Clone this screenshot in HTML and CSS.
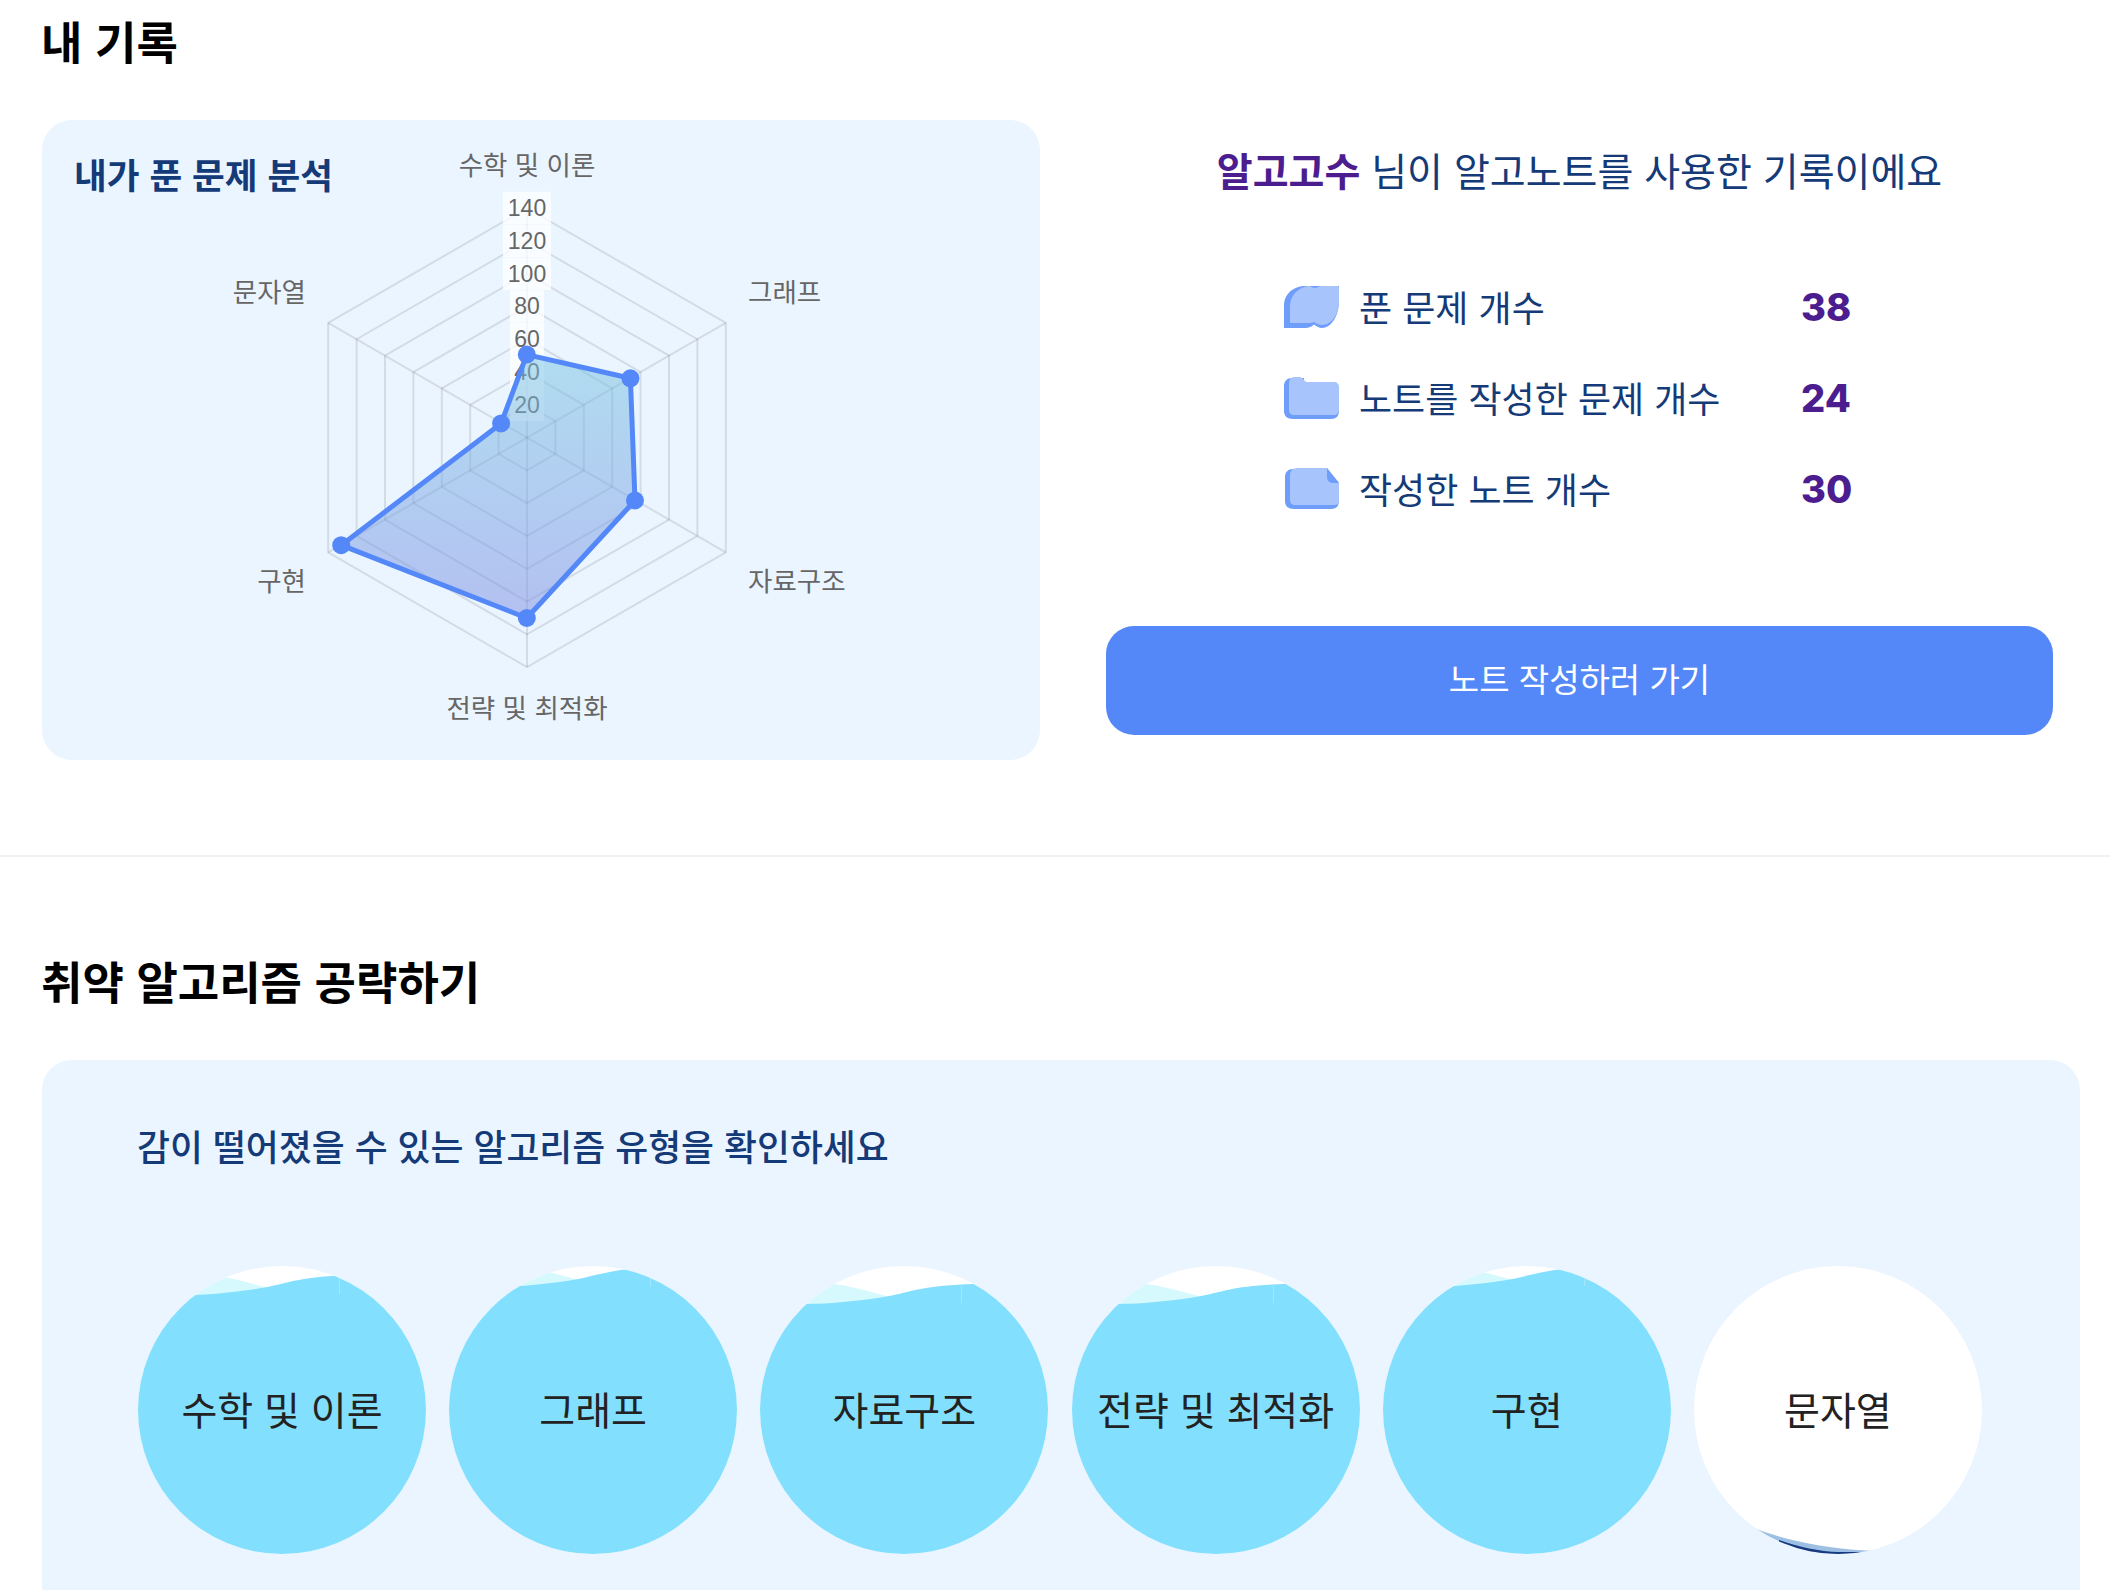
FILE: index.html
```html
<!DOCTYPE html>
<html lang="ko">
<head>
    <meta charset="UTF-8">
    <meta name="viewport" content="width=device-width, initial-scale=1.0">
    <title>내 기록</title>
    <link rel="stylesheet" href="styles.css">
</head>
<body>
<div class="page">
    <section class="record">
        <h2 class="section-title">내 기록</h2>
        <div class="record-row">
            <div class="chart-card">
                <h3 class="chart-title">내가 푼 문제 분석</h3>
                <svg class="radar" viewBox="0 0 998 640" width="998" height="640">
                    <defs>
                        <linearGradient id="radar-fill" gradientUnits="userSpaceOnUse" x1="0" y1="234" x2="0" y2="498">
                            <stop offset="0" stop-color="rgb(117,195,225)" stop-opacity="0.5"/>
                            <stop offset="1" stop-color="rgb(123,139,227)" stop-opacity="0.5"/>
                        </linearGradient>
                    </defs>
                    <g transform="translate(485 317.6)">
                        <g class="grid">
                            <polygon points="0,-32.79 28.4,-16.39 28.4,16.39 0,32.79 -28.4,16.39 -28.4,-16.39"/>
                            <polygon points="0,-65.58 56.8,-32.79 56.8,32.79 0,65.58 -56.8,32.79 -56.8,-32.79"/>
                            <polygon points="0,-98.37 85.2,-49.18 85.2,49.18 0,98.37 -85.2,49.18 -85.2,-49.18"/>
                            <polygon points="0,-131.16 113.6,-65.57 113.6,65.57 0,131.16 -113.6,65.57 -113.6,-65.57"/>
                            <polygon points="0,-163.95 142,-81.97 142,81.97 0,163.95 -142,81.97 -142,-81.97"/>
                            <polygon points="0,-196.74 170.4,-98.36 170.4,98.36 0,196.74 -170.4,98.36 -170.4,-98.36"/>
                            <polygon points="0,-229.5 198.8,-114.75 198.8,114.75 0,229.5 -198.8,114.75 -198.8,-114.75"/>
                            <line x1="0" y1="0" x2="0" y2="-229.5"/>
                            <line x1="0" y1="0" x2="198.8" y2="-114.75"/>
                            <line x1="0" y1="0" x2="198.8" y2="114.75"/>
                            <line x1="0" y1="0" x2="0" y2="229.5"/>
                            <line x1="0" y1="0" x2="-198.8" y2="114.75"/>
                            <line x1="0" y1="0" x2="-198.8" y2="-114.75"/>
                        </g>
                        <g class="tick-bg">
                            <rect x="-24" y="-245.8" width="48" height="32.5"/>
                            <rect x="-24" y="-213" width="48" height="32.5"/>
                            <rect x="-24" y="-180.2" width="48" height="32.5"/>
                            <rect x="-17" y="-147.4" width="34" height="32.5"/>
                            <rect x="-17" y="-114.6" width="34" height="32.5"/>
                            <rect x="-17" y="-81.8" width="34" height="32.5"/>
                            <rect x="-17" y="-49" width="34" height="32.5"/>
                        </g>
                        <g class="ticks">
                            <text x="0" y="-229.5">140</text>
                            <text x="0" y="-196.7">120</text>
                            <text x="0" y="-163.9">100</text>
                            <text x="0" y="-131.2">80</text>
                            <text x="0" y="-98.4">60</text>
                            <text x="0" y="-65.6">40</text>
                            <text x="0" y="-32.8">20</text>
                        </g>
                    </g>
                    <polygon class="area" points="484.8,234.6 588.4,258.3 593,380.5 484.8,498 299.2,425.2 459.1,303.4"/>
                    <g class="dots">
                        <circle cx="484.8" cy="234.6" r="9"/>
                        <circle cx="588.4" cy="258.3" r="9"/>
                        <circle cx="593" cy="380.5" r="9"/>
                        <circle cx="484.8" cy="498" r="9"/>
                        <circle cx="299.2" cy="425.2" r="9"/>
                        <circle cx="459.1" cy="303.4" r="9"/>
                    </g>
                    <g class="labels">
                        <text x="485" y="43.3" text-anchor="middle">수학 및 이론</text>
                        <text x="706" y="170.5" text-anchor="start">그래프</text>
                        <text x="706" y="459.3" text-anchor="start">자료구조</text>
                        <text x="485" y="586.5" text-anchor="middle">전략 및 최적화</text>
                        <text x="264" y="459.3" text-anchor="end">구현</text>
                        <text x="264" y="170.5" text-anchor="end">문자열</text>
                    </g>
                </svg>
            </div>
            <div class="summary">
                <p class="greeting"><strong>알고고수</strong> 님이 알고노트를 사용한 기록이에요</p>
                <ul class="stats">
                    <li class="stat">
                        <svg class="stat-icon" viewBox="0 0 56 42" width="56" height="42">
                            <path class="icon-back" d="M0 42V20C0 8 9 0 22 0H55V15C55 30 47 42 38 42C35 42 32 40 30 38.500C28 40.500 25 42 21 42Z"/>
                            <path class="icon-front" d="M6 37V21C6 9 14 1.500 25 0C27 0 28.500 2 31 2C33 2 35 0 38 0H53C54.500 0 55 .8 55 2V15C55 28 48 39 38 39C35 39 32 37 30 36C28 37 25 37 22 37Z"/>
                        </svg>
                        <span class="stat-label">푼 문제 개수</span>
                        <span class="stat-value">38</span>
                    </li>
                    <li class="stat">
                        <svg class="stat-icon" viewBox="0 0 56 42" width="56" height="42">
                            <path class="icon-back" d="M0 9C0 4 3 1 8 1H20V42H9C3 42 0 39 0 34Z"/>
                            <path class="icon-back" d="M12 20H55V34C55 39 52 42 47 42H9V30Z"/>
                            <path class="icon-front" d="M5 6C5 2 8 0 11 0H15C18 0 19 2 20 3C21 4.500 22 5 24 5H50C53 5 55 7 55 10V33C55 36 53 38 50 38H10C7 38 5 36 5 33Z"/>
                        </svg>
                        <span class="stat-label">노트를 작성한 문제 개수</span>
                        <span class="stat-value">24</span>
                    </li>
                    <li class="stat">
                        <svg class="stat-icon" viewBox="0 0 56 42" width="56" height="42">
                            <path class="icon-back" d="M1 9C1 4 4 1 9 1H30V41H10C4 41 1 38 1 33Z"/>
                            <path class="icon-back" d="M20 20H55V33C55 38 52 41 47 41H10V30Z"/>
                            <path class="icon-front" d="M6 7C6 3 9 0 13 0H43L55 15V33C55 36 53 37 50 37H11C8 37 6 35 6 32Z"/>
                            <path class="icon-back" d="M43 0L55 15H49C45 15 43 12 43 9Z"/>
                        </svg>
                        <span class="stat-label">작성한 노트 개수</span>
                        <span class="stat-value">30</span>
                    </li>
                </ul>
                <button class="write-btn">노트 작성하러 가기</button>
            </div>
        </div>
    </section>

    <section class="weak">
        <h2 class="section-title">취약 알고리즘 공략하기</h2>
        <div class="weak-card">
            <h3 class="weak-title">감이 떨어졌을 수 있는 알고리즘 유형을 확인하세요</h3>
            <div class="bubbles">
                <div class="bubble">
                    <svg class="water" viewBox="0 0 288 288">
                        <g transform="translate(0 29)">
                            <path class="wave-light" d="M0 -20H74C92 -18 110 -12 128 -7.700V10H0Z"/>
                            <path class="wave-main" d="M0 0H46C70 0 100 -3 128 -7.700C150 -12 165 -19 215 -20H288V288H0Z"/>
                            <rect class="seam" x="201" y="-20" width="1" height="19"/>
                        </g>
                    </svg>
                    <span class="bubble-name">수학 및 이론</span>
                </div>
                <div class="bubble">
                    <svg class="water" viewBox="0 0 288 288">
                        <g transform="translate(0 21)">
                            <path class="wave-light" d="M0 -20H74C92 -18 110 -12 128 -7.700V10H0Z"/>
                            <path class="wave-main" d="M0 0H46C70 0 100 -3 128 -7.700C150 -12 165 -19 215 -20H288V288H0Z"/>
                            <rect class="seam" x="201" y="-20" width="1" height="19"/>
                        </g>
                    </svg>
                    <span class="bubble-name">그래프</span>
                </div>
                <div class="bubble">
                    <svg class="water" viewBox="0 0 288 288">
                        <g transform="translate(0 38)">
                            <path class="wave-light" d="M0 -20H74C92 -18 110 -12 128 -7.700V10H0Z"/>
                            <path class="wave-main" d="M0 0H46C70 0 100 -3 128 -7.700C150 -12 165 -19 215 -20H288V288H0Z"/>
                            <rect class="seam" x="201" y="-20" width="1" height="19"/>
                        </g>
                    </svg>
                    <span class="bubble-name">자료구조</span>
                </div>
                <div class="bubble">
                    <svg class="water" viewBox="0 0 288 288">
                        <g transform="translate(0 38)">
                            <path class="wave-light" d="M0 -20H74C92 -18 110 -12 128 -7.700V10H0Z"/>
                            <path class="wave-main" d="M0 0H46C70 0 100 -3 128 -7.700C150 -12 165 -19 215 -20H288V288H0Z"/>
                            <rect class="seam" x="201" y="-20" width="1" height="19"/>
                        </g>
                    </svg>
                    <span class="bubble-name">전략 및 최적화</span>
                </div>
                <div class="bubble">
                    <svg class="water" viewBox="0 0 288 288">
                        <g transform="translate(0 21)">
                            <path class="wave-light" d="M0 -20H74C92 -18 110 -12 128 -7.700V10H0Z"/>
                            <path class="wave-main" d="M0 0H46C70 0 100 -3 128 -7.700C150 -12 165 -19 215 -20H288V288H0Z"/>
                            <rect class="seam" x="201" y="-20" width="1" height="19"/>
                        </g>
                    </svg>
                    <span class="bubble-name">구현</span>
                </div>
                <div class="bubble">
                    <svg class="water" viewBox="0 0 288 288">
                        <path class="wave-low-light" d="M0 260L60 262C85 272 125 282 172 284.500H288V288H0Z"/>
                        <path class="wave-low-dark" d="M85 274C105 281 125 285.500 145 286H175V288H85Z"/>
                    </svg>
                    <span class="bubble-name">문자열</span>
                </div>
            </div>
        </div>
    </section>
</div>
</body>
</html>
```

FILE: styles.css
```css
* {
    box-sizing: border-box;
}
body {
    margin: 0;
    padding: 0;
    background-color: #fff;
    font-family: "Noto Sans CJK KR", "Noto Sans", sans-serif;
    color: #111;
}
.page {
    width: 2110px;
    height: 1590px;
    overflow: hidden;
}
h2, h3, p, ul {
    margin: 0;
    padding: 0;
}
ul {
    list-style: none;
}

.section-title {
    margin-left: -1px;
    font-size: 45px;
    font-weight: 700;
    line-height: 60px;
    color: #000;
}

/* top section */
.record {
    padding: 11px 57px 95px 42px;
    border-bottom: 2px solid #f0f1f4;
}
.record-row {
    display: flex;
    margin-top: 49px;
}
.chart-card {
    display: grid;
    width: 998px;
    height: 640px;
    background-color: #ebf5ff;
    border-radius: 30px;
}
.chart-title {
    grid-area: 1 / 1;
    align-self: start;
    padding: 29px 0 0 32px;
    font-size: 35.6px;
    font-weight: 700;
    line-height: 50px;
    color: #143a78;
}
.radar {
    grid-area: 1 / 1;
    display: block;
}
.grid polygon, .grid line {
    fill: none;
    stroke: rgba(0, 0, 0, 0.1);
    stroke-width: 2;
}
.tick-bg rect {
    fill: rgba(255, 255, 255, 0.75);
}
.ticks text {
    font-family: "Liberation Sans", Arial, sans-serif;
    font-size: 23px;
    fill: #666;
    text-anchor: middle;
    dominant-baseline: central;
}
.area {
    fill: url(#radar-fill);
    stroke: #5488f8;
    stroke-width: 5;
    stroke-linejoin: round;
}
.dots circle {
    fill: #5488f8;
}
.labels text {
    font-size: 26.5px;
    fill: #666;
    dominant-baseline: central;
}

.summary {
    width: 947px;
    margin-left: 66px;
    padding-top: 24px;
}
.greeting {
    font-size: 39px;
    line-height: 50px;
    text-align: center;
    color: #143a78;
}
.greeting strong {
    color: #4c1d8f;
    font-weight: 700;
}
.stats {
    display: flex;
    flex-direction: column;
    gap: 31px;
    margin-top: 83px;
    padding-left: 178px;
}
.stat {
    display: grid;
    grid-template-columns: 56px 423px auto;
    column-gap: 19px;
    align-items: center;
    height: 60px;
}
.stat-icon {
    display: block;
}
.icon-back {
    fill: #6f9dfa;
}
.icon-front {
    fill: #a8c4fc;
}
.stat-label {
    padding-bottom: 3px;
    font-size: 36px;
    color: #143a78;
}
.stat-value {
    font-family: Inter, sans-serif;
    font-size: 38px;
    font-weight: 800;
    color: #4c1d8f;
}
.write-btn {
    display: block;
    width: 100%;
    height: 109px;
    margin-top: 107px;
    padding-bottom: 7px;
    background-color: #5488f8;
    color: #fff;
    border: none;
    border-radius: 28px;
    font-family: inherit;
    font-size: 33px;
    cursor: pointer;
}

/* bottom section */
.weak {
    padding: 94px 30px 0 42px;
}
.weak-card {
    height: 700px;
    margin-top: 49px;
    padding: 60px 0 0 96px;
    background-color: #ebf5ff;
    border-radius: 30px;
}
.weak-title {
    margin-left: -1px;
    font-size: 35.8px;
    font-weight: 500;
    line-height: 50px;
    color: #143a78;
}
.bubbles {
    display: flex;
    gap: 23.2px;
    margin-top: 96px;
}
.bubble {
    display: grid;
    place-items: center;
    width: 288px;
    height: 288px;
    background-color: #fff;
    border-radius: 50%;
    overflow: hidden;
}
.water {
    grid-area: 1 / 1;
    display: block;
    width: 288px;
    height: 288px;
}
.bubble-name {
    grid-area: 1 / 1;
    padding-bottom: 4px;
    font-size: 39px;
    color: #222;
}
.wave-main {
    fill: #82dffd;
}
.wave-light {
    fill: #d6f9fe;
}
.seam {
    fill: #a2e7fd;
}
.wave-low-light {
    fill: #9dbfe3;
}
.wave-low-dark {
    fill: #16397f;
}
```
